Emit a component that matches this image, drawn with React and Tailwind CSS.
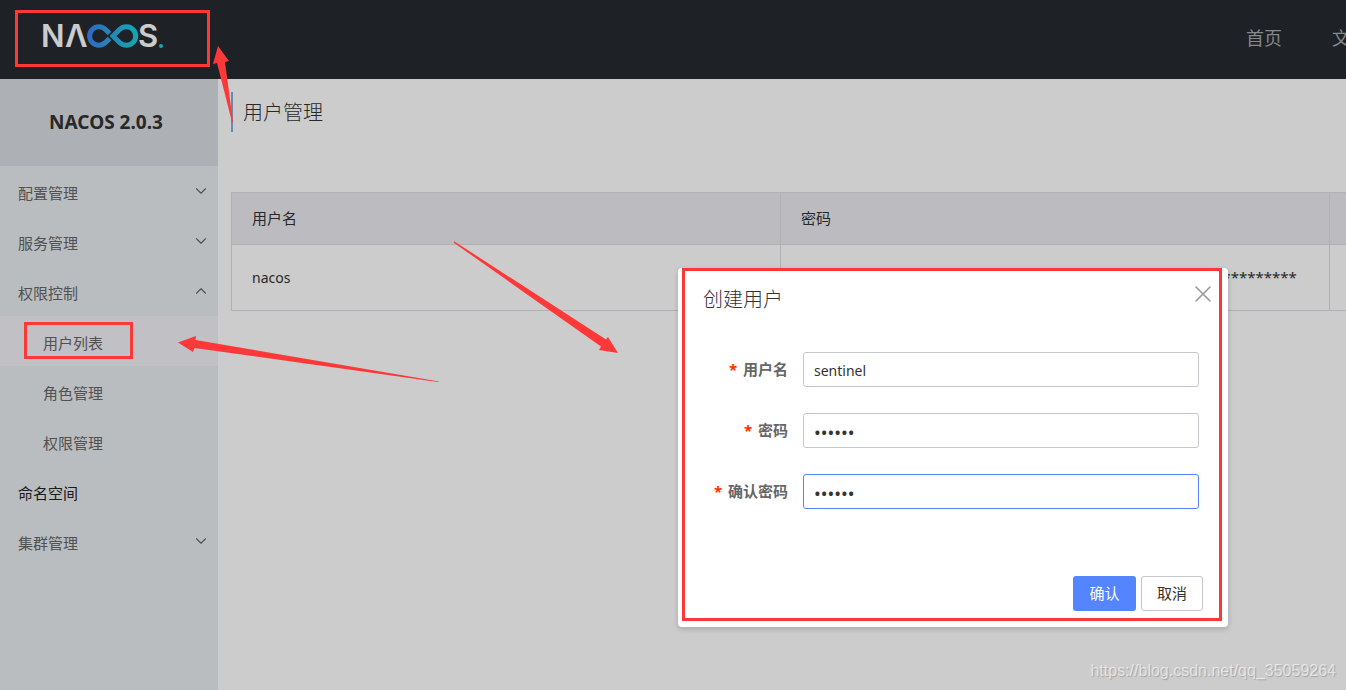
import { ChevronDown, ChevronUp, X } from 'lucide-react'
import clsx from 'clsx'

const menu = [
  { label: '配置管理', state: 'closed' },
  { label: '服务管理', state: 'closed' },
  {
    label: '权限控制',
    state: 'open',
    children: [{ label: '用户列表', active: true }, { label: '角色管理' }, { label: '权限管理' }],
  },
  { label: '命名空间' },
  { label: '集群管理', state: 'closed' },
]

const users = [{ name: 'nacos', password: '*'.repeat(60) }]

const fields = [
  { id: 'username', label: '用户名', type: 'text', value: 'sentinel' },
  { id: 'password', label: '密码', type: 'password', value: '123456' },
  { id: 'rePassword', label: '确认密码', type: 'password', value: '123456', focused: true },
]

function Logo() {
  return (
    <svg
      width="130"
      height="56"
      viewBox="0 0 130 56"
      role="img"
      aria-label="NACOS."
      className="font-['Inter',sans-serif] font-semibold"
    >
      <defs>
        <linearGradient id="loop" gradientUnits="userSpaceOnUse" x1="48" y1="0" x2="98" y2="0">
          <stop offset="0" stopColor="#3f83f2" />
          <stop offset="1" stopColor="#19d3dc" />
        </linearGradient>
      </defs>
      <text x="1" y="37" fontSize="31" fill="#fff">N</text>
      <text x="25" y="37" fontSize="31" fill="#fff">Λ</text>
      <g fill="none" stroke="url(#loop)" strokeWidth="5">
        <path d="M69.500 23.500 L66 20 C64 18 62 16.800 58.800 16.800 A9.200 9.200 0 0 0 58.800 35.200 C62 35.200 64 34 66 32 L69.500 28.500" />
        <path d="M73 26 L79.500 19.500 C81.500 17.600 84 16.800 86.500 16.800 A9.200 9.200 0 0 1 86.500 35.200 C84 35.200 81.500 34.400 79.500 32.500 Z" />
      </g>
      <text x="98" y="37" fontSize="31" fill="#fff">S</text>
      <circle cx="121" cy="36" r="2" fill="#19d3dc" />
    </svg>
  )
}

function Header() {
  return (
    <header className="flex h-[79px] items-center justify-between overflow-hidden bg-[#262b30] pb-1 pl-10">
      <a href="#home">
        <Logo />
      </a>
      <nav className="flex w-[100px] gap-[50px] overflow-hidden whitespace-nowrap text-lg text-[#a8aaac]">
        <a href="#home" className="shrink-0">首页</a>
        <a href="#docs" className="shrink-0">文档</a>
      </nav>
    </header>
  )
}

function MenuItem({ item }) {
  const Icon = item.state === 'open' ? ChevronUp : ChevronDown

  return (
    <li>
      <a
        href="#menu"
        className={clsx(
          'flex h-[50px] items-center justify-between pt-1 pr-2 pl-[18px]',
          item.state ? 'text-[#666]' : 'text-[#222]',
        )}
      >
        {item.label}
        {item.state && <Icon size={18} strokeWidth={1.5} className="mb-1" />}
      </a>
      {item.children && (
        <ul>
          {item.children.map((child) => (
            <li key={child.label}>
              <a
                href="#menu"
                className={clsx(
                  'flex h-[50px] items-center pt-1 pl-[43px] text-[#666]',
                  child.active && 'bg-[#f2f0f6]',
                )}
              >
                <span className="relative">
                  {child.label}
                  {child.active && (
                    <span className="absolute -top-[10px] -right-[30px] -bottom-[5px] -left-[19px] z-20 border-3 border-[#fd3838]" />
                  )}
                </span>
              </a>
            </li>
          ))}
        </ul>
      )}
    </li>
  )
}

function Sidebar() {
  return (
    <aside className="w-[218px] shrink-0 bg-[#e8edf0]">
      <h1 className="flex h-[87px] items-center justify-center bg-[#d9dde3] pr-[6px] text-[19px] font-bold text-[#333]">
        NACOS 2.0.3
      </h1>
      <ul>
        {menu.map((item) => (
          <MenuItem key={item.label} item={item} />
        ))}
      </ul>
    </aside>
  )
}

function UserTable() {
  return (
    <table className="w-[147.8%] table-fixed border-collapse border border-[#dcdee3] text-left text-[#333]">
      <thead>
        <tr className="h-[52px] bg-[#ebecf0]">
          <th className="border border-[#dcdee3] px-5 font-normal">用户名</th>
          <th className="border border-[#dcdee3] px-5 font-normal">密码</th>
          <th className="border border-[#dcdee3]" />
        </tr>
      </thead>
      <tbody>
        {users.map((user) => (
          <tr key={user.name} className="h-[66px]">
            <td className="border border-[#dcdee3] px-5 text-sm">{user.name}</td>
            <td className="border border-[#dcdee3] px-5">{user.password}</td>
            <td className="border border-[#dcdee3]" />
          </tr>
        ))}
      </tbody>
    </table>
  )
}

function CreateUserDialog() {
  return (
    <div
      role="dialog"
      aria-labelledby="dialog-title"
      className="absolute top-[268px] left-[678px] z-20 w-[550px] rounded-sm bg-white px-[25px] pt-4 pb-4 shadow-[0_2px_4px_1px_rgba(0,0,0,0.13)]"
    >
      <div className="flex items-start justify-between">
        <h2 id="dialog-title" className="text-xl leading-[32px] font-light text-[#333]">创建用户</h2>
        <button type="button" aria-label="关闭" className="-mt-1 -mr-[14px] text-[#999]">
          <X size={28} strokeWidth={1.3} />
        </button>
      </div>
      <form className="mt-9 flex flex-col gap-[26px] pr-1">
        {fields.map((field) => (
          <div key={field.id} className="flex items-center gap-[15px]">
            <label htmlFor={field.id} className="w-[85px] shrink-0 text-right font-bold whitespace-nowrap text-[#666]">
              <span className="mr-[2px] text-[#ff3000]">*</span> {field.label}
            </label>
            <input
              id={field.id}
              type={field.type}
              defaultValue={field.value}
              className={clsx(
                'h-[35px] min-w-0 flex-1 rounded-[3px] border px-[10px] pt-[2px] text-[#333] outline-none',
                field.type === 'password' ? 'text-lg' : 'text-sm',
                field.focused ? 'border-[#5584ff]' : 'border-[#c4c6cf]',
              )}
            />
          </div>
        ))}
      </form>
      <div className="mt-[67px] flex justify-end gap-[5px]">
        <button type="button" className="h-[35px] w-[63px] rounded-[3px] bg-[#5584ff] text-white">确认</button>
        <button type="button" className="h-[35px] w-[62px] rounded-[3px] border border-[#c4c6cf] text-[#333]">取消</button>
      </div>
      <div className="pointer-events-none absolute top-0 right-[6px] bottom-[6px] left-1 border-3 border-[#fd3838]" />
    </div>
  )
}

function Arrows() {
  return (
    <svg
      width="640"
      height="400"
      viewBox="0 0 640 400"
      fill="#fd3838"
      aria-hidden
      className="pointer-events-none absolute top-0 left-0 z-20"
    >
      <path d="M218 46 L229 61 L225 62 L233 122 L232 122 L217 63 L213 64 Z" />
      <path d="M618 353 L599 350 L601 346.500 L453.500 242.500 L454.500 241.500 L606 339.500 L608 337 Z" />
      <path d="M178 342.500 L196 336 L195.500 340 L439 381.500 L438 382 L194.500 348 L193 352 Z" />
    </svg>
  )
}

export default function App() {
  return (
    <div className="relative flex min-h-screen flex-col overflow-hidden bg-white font-['Noto_Sans','Noto_Sans_CJK_SC',sans-serif] text-[15px]">
      <Header />
      <div className="flex flex-1">
        <Sidebar />
        <main className="min-w-0 flex-1 overflow-hidden pt-[13px] pl-[13px]">
          <h2 className="mb-[60px] h-10 border-l-2 border-[#7eafdc] pl-[10px] text-xl leading-[42px] font-light text-[#333]">
            用户管理
          </h2>
          <UserTable />
        </main>
      </div>

      <div className="absolute inset-0 z-10 bg-black/20" />
      <div className="absolute top-[10px] left-[15px] z-20 h-[57px] w-[195px] border-3 border-[#fd3838]" />
      <CreateUserDialog />
      <Arrows />
      <p className="absolute right-[10px] bottom-[7px] z-20 font-['Liberation_Sans',sans-serif] text-base text-white/60 [text-shadow:1px_1px_1px_rgba(0,0,0,0.2)]">
        https://blog.csdn.net/qq_35059264
      </p>
    </div>
  )
}
